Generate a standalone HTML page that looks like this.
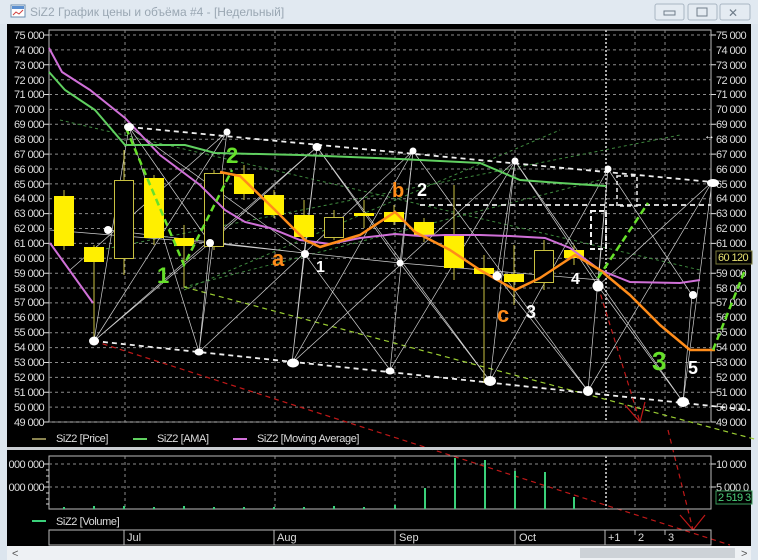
<!DOCTYPE html>
<html><head><meta charset="utf-8"><style>
html,body{margin:0;padding:0;background:#dde6ee;width:758px;height:560px;overflow:hidden}
svg{display:block}
text{font-family:"Liberation Sans","DejaVu Sans",sans-serif}
</style></head><body>
<svg width="758" height="560" viewBox="0 0 758 560" xmlns="http://www.w3.org/2000/svg">
<!-- window chrome -->
<rect x="0" y="0" width="758" height="560" fill="#dce5ee"/>
<rect x="0" y="0" width="758" height="24" fill="#e1e9f1"/>
<rect x="11" y="5" width="14" height="12" fill="#fff" stroke="#6a8db0"/>
<rect x="12" y="6" width="12" height="3" fill="#5b8fd0"/>
<path d="M13 15 L16 12 L19 14 L23 10" stroke="#d04040" fill="none"/>
<text x="30" y="16" font-size="12" fill="#9aa7b3">SiZ2 График цены и объёма #4 - [Недельный]</text>
<rect x="655" y="4" width="29" height="16" rx="2" fill="#e4ebf2" stroke="#a9b6c3"/>
<rect x="664" y="11" width="11" height="4" fill="none" stroke="#6f7d8a"/>
<rect x="688" y="4" width="29" height="16" rx="2" fill="#e4ebf2" stroke="#a9b6c3"/>
<rect x="697" y="8" width="10" height="8" fill="none" stroke="#6f7d8a"/>
<rect x="720" y="4" width="30" height="16" rx="2" fill="#e4ebf2" stroke="#a9b6c3"/>
<text x="728" y="17" font-size="12" fill="#6f7d8a" font-weight="bold">✕</text>
<!-- black area -->
<rect x="7" y="24" width="744" height="522" fill="#000"/>
<!-- scrollbar -->
<rect x="7" y="546" width="744" height="14" fill="#eef1f4"/>
<rect x="580" y="548" width="155" height="10" fill="#cdd2d7"/>
<text x="12" y="557" font-size="11" fill="#555">&lt;</text>
<text x="741" y="557" font-size="11" fill="#555">&gt;</text>
<!-- price panel frame -->
<rect x="49" y="30" width="662" height="392" fill="none" stroke="#bbb" stroke-width="1"/>
<!-- horizontal grid -->
<path stroke="#8a8a8a" stroke-width="1" stroke-dasharray="3,3" d="M49 35H711M49 49.9H711M49 64.8H711M49 79.7H711M49 94.5H711M49 109.4H711M49 124.3H711M49 139.2H711M49 154.1H711M49 169H711M49 183.9H711M49 198.7H711M49 213.6H711M49 228.5H711M49 243.4H711M49 258.3H711M49 273.2H711M49 288H711M49 302.9H711M49 317.8H711M49 332.7H711M49 347.6H711M49 362.5H711M49 377.4H711M49 392.2H711M49 407.1H711M49 422H711"/>
<!-- vertical grid -->
<path stroke="#8a8a8a" stroke-width="1" stroke-dasharray="3,3" d="M125 30V422M275 30V422M395 30V422M515 30V422M635 30V422M665 30V422"/>
<path stroke="#aaa" stroke-width="2" stroke-dasharray="2,2" d="M606 30V422"/>
<!-- axis labels -->
<g font-size="11" fill="#ddd" letter-spacing="-0.6" text-anchor="end">
<text x="44" y="39">75 000</text><text x="44" y="54">74 000</text><text x="44" y="69">73 000</text><text x="44" y="84">72 000</text><text x="44" y="98">71 000</text><text x="44" y="113">70 000</text><text x="44" y="128">69 000</text><text x="44" y="143">68 000</text><text x="44" y="158">67 000</text><text x="44" y="173">66 000</text><text x="44" y="188">65 000</text><text x="44" y="202">64 000</text><text x="44" y="217">63 000</text><text x="44" y="232">62 000</text><text x="44" y="247">61 000</text><text x="44" y="262">60 000</text><text x="44" y="277">59 000</text><text x="44" y="292">58 000</text><text x="44" y="306">57 000</text><text x="44" y="321">56 000</text><text x="44" y="336">55 000</text><text x="44" y="351">54 000</text><text x="44" y="366">53 000</text><text x="44" y="381">52 000</text><text x="44" y="396">51 000</text><text x="44" y="411">50 000</text><text x="44" y="426">49 000</text>
</g>
<g font-size="11" fill="#ddd" letter-spacing="-0.6">
<text x="716" y="39">75 000</text><text x="716" y="54">74 000</text><text x="716" y="69">73 000</text><text x="716" y="84">72 000</text><text x="716" y="98">71 000</text><text x="716" y="113">70 000</text><text x="716" y="128">69 000</text><text x="716" y="143">68 000</text><text x="716" y="158">67 000</text><text x="716" y="173">66 000</text><text x="716" y="188">65 000</text><text x="716" y="202">64 000</text><text x="716" y="217">63 000</text><text x="716" y="232">62 000</text><text x="716" y="247">61 000</text><text x="716" y="277">59 000</text><text x="716" y="292">58 000</text><text x="716" y="306">57 000</text><text x="716" y="321">56 000</text><text x="716" y="336">55 000</text><text x="716" y="351">54 000</text><text x="716" y="366">53 000</text><text x="716" y="381">52 000</text><text x="716" y="396">51 000</text><text x="716" y="411">50 000</text><text x="716" y="426">49 000</text>
</g>
<path stroke="#ddd" d="M44 35H49M44 64.8H49M44 94.5H49M44 124.3H49M44 154.1H49M44 183.9H49M44 213.6H49M44 243.4H49M44 273.2H49M44 302.9H49M44 332.7H49M44 362.5H49M44 392.2H49M44 422H49M711 35H716M711 64.8H716M711 94.5H716M711 124.3H716M711 154.1H716M711 183.9H716M711 213.6H716M711 243.4H716M711 273.2H716M711 302.9H716M711 332.7H716M711 362.5H716M711 392.2H716M711 422H716"/>
<rect x="716" y="251" width="36" height="13" fill="#000" stroke="#7a7a3a"/>
<text x="718" y="261" font-size="11" fill="#e6e070" letter-spacing="-0.6">60 120</text>
<!-- dim green dashed -->
<path stroke="#3f8a3f" stroke-width="1" stroke-dasharray="3,3" fill="none" d="M100 250L680 135M184 287L600 180M60 120L700 270M184 290L560 130"/>
<!-- lime dashed long -->
<path stroke="#9acd32" stroke-width="1.2" stroke-dasharray="5,4" fill="none" d="M184 287L758 440"/>
<!-- white thin web -->
<path stroke="#cfcfcf" stroke-width="0.7" fill="none" d="M94 341L129 127L210 243L94 341L227 132L199 352L129 127L304 253L292 363L317 147L210 243L199 352M304 253L317 147L400 263L413 151L390 370L304 253M292 363L413 151M390 370L515 161L490 381L400 263M497 276L515 161L598 286L608 169L588 391L497 276M490 381L608 169M598 286L712 182L683 402L598 286M588 391L712 182M692 295L683 402M692 295L608 169M50 230L210 243L400 263L600 280M108 230L304 253M70 270L227 132M317 147L490 381M413 151L588 391M515 161L683 402M94 341L317 147M199 352L413 151M292 363L515 161"/>
<!-- white dashed heavy -->
<path stroke="#eee" stroke-width="1.8" stroke-dasharray="5,4" fill="none" d="M129 127L712 182M94 341L750 410M420 205H711"/>
<rect x="617" y="176" width="20" height="30" fill="none" stroke="#eee" stroke-width="1.5" stroke-dasharray="4,3"/>
<rect x="591" y="211" width="15" height="38" fill="none" stroke="#eee" stroke-width="2" stroke-dasharray="5,3"/>
<!-- red dashed -->
<path stroke="#c01818" stroke-width="1.2" stroke-dasharray="5,4" fill="none" d="M94 341L730 545M598 286L640 422M668 430L693 530"/>
<path stroke="#c01818" stroke-width="1.2" fill="none" d="M625 405L640 422L645 402M680 515L693 530L705 515"/>
<!-- candles -->
<g stroke="#c8c040" stroke-width="1">
<path d="M64 190V250M94 245V345M124 150V275M154 175V245M184 225V287M214 170V250M244 165V200M274 190V218M304 200V240M334 210V240M364 200V228M394 205V225M424 218V242M454 185V280M484 255V383M514 245V305M544 240V290M574 245V265"/>
</g>
<g fill="#ffef00">
<rect x="54" y="196" width="20" height="50"/><rect x="84" y="247" width="20" height="15"/><rect x="144" y="178" width="20" height="60"/><rect x="174" y="238" width="20" height="8"/><rect x="234" y="174" width="20" height="20"/><rect x="264" y="195" width="20" height="20"/><rect x="294" y="215" width="20" height="22"/><rect x="354" y="213" width="20" height="3"/><rect x="384" y="212" width="20" height="10"/><rect x="414" y="222" width="20" height="14"/><rect x="444" y="236" width="20" height="32"/><rect x="474" y="268" width="20" height="6"/><rect x="504" y="274" width="20" height="8"/><rect x="564" y="250" width="20" height="8"/>
</g>
<g fill="#000" stroke="#c8c040">
<rect x="114.5" y="180.5" width="19" height="78"/><rect x="204.5" y="173.5" width="19" height="73"/><rect x="324.5" y="217.5" width="19" height="20"/><rect x="534.5" y="250.5" width="19" height="32"/>
</g>
<!-- MA & AMA -->
<path stroke="#d070d8" stroke-width="2" fill="none" d="M50 243L93 303M49 48L62 72L90 90L125 118L160 155L200 185L225 210L245 222L270 228L300 240L330 244L360 238L395 234L420 236L445 235L480 235L510 236L545 238L570 248L600 270L630 282L680 283L700 280"/>
<path stroke="#60d060" stroke-width="2" fill="none" d="M49 72L65 90L95 110L125 145L185 145L215 153L300 155L400 159L480 163L520 180L560 183L606 186"/>
<!-- orange -->
<path stroke="#ff8c1a" stroke-width="2.5" fill="none" stroke-linejoin="round" d="M220 172L240 176L275 210L305 240L320 247L360 235L395 212L415 232L450 250L480 270L515 290L540 278L575 255L600 270L630 295L660 325L690 350L715 350"/>
<!-- lime dashed zigzag -->
<path stroke="#66e02a" stroke-width="2.5" stroke-dasharray="7,4" fill="none" d="M126 128L184 265L232 170M598 278L648 203M713 350L745 270"/>
<!-- dots -->
<g fill="#fff">
<ellipse cx="129" cy="127" rx="5" ry="4"/><circle cx="227" cy="132" r="3.5"/><ellipse cx="317" cy="147" rx="4.5" ry="4"/><circle cx="413" cy="151" r="3.5"/><circle cx="515" cy="161" r="3.5"/><circle cx="608" cy="169" r="3.5"/><ellipse cx="713" cy="183" rx="6" ry="4"/><ellipse cx="94" cy="341" rx="5" ry="4.5"/><ellipse cx="199" cy="352" rx="4.5" ry="3.5"/><ellipse cx="293" cy="363" rx="6" ry="4.5"/><ellipse cx="390" cy="371" rx="4.5" ry="3.5"/><ellipse cx="490" cy="381" rx="6" ry="5"/><ellipse cx="588" cy="391" rx="5" ry="5"/><ellipse cx="683" cy="402" rx="6" ry="5"/><circle cx="210" cy="243" r="4"/><circle cx="305" cy="254" r="4"/><circle cx="400" cy="263" r="3.5"/><circle cx="598" cy="286" r="5.5"/><circle cx="693" cy="295" r="4"/><circle cx="497" cy="276" r="4.5"/><circle cx="108" cy="230" r="4"/>
</g>
<!-- handwritten labels -->
<g font-family="Liberation Sans,sans-serif" font-weight="bold">
<text x="157" y="283" font-size="22" fill="#66e02a">1</text>
<text x="226" y="163" font-size="22" fill="#66e02a">2</text>
<text x="652" y="370" font-size="26" fill="#66e02a">3</text>
<text x="272" y="266" font-size="22" fill="#ff8c1a">a</text>
<text x="392" y="197" font-size="20" fill="#ff8c1a">b</text>
<text x="497" y="322" font-size="22" fill="#ff8c1a">c</text>
<text x="316" y="272" font-size="16" fill="#fff">1</text>
<text x="417" y="196" font-size="18" fill="#fff">2</text>
<text x="526" y="318" font-size="18" fill="#fff">3</text>
<text x="571" y="284" font-size="16" fill="#fff">4</text>
<text x="688" y="374" font-size="18" fill="#fff">5</text>
</g>
<text x="704" y="139" font-size="11" fill="#fff">↔</text>
<!-- legend -->
<g font-size="11" fill="#ddd" letter-spacing="-0.4">
<path d="M32 439H46" stroke="#8a8450" stroke-width="2"/><text x="56" y="442">SiZ2 [Price]</text>
<path d="M133 439H147" stroke="#60d060" stroke-width="2"/><text x="157" y="442">SiZ2 [AMA]</text>
<path d="M233 439H247" stroke="#d070d8" stroke-width="2"/><text x="257" y="442">SiZ2 [Moving Average]</text>
</g>
<rect x="7" y="447" width="744" height="3" fill="#c8ccd0"/>
<!-- volume panel -->
<rect x="49" y="456" width="662" height="53" fill="none" stroke="#bbb"/>
<path stroke="#8a8a8a" stroke-dasharray="3,3" d="M49 464H711M49 487H711M125 456V509M275 456V509M395 456V509M515 456V509M635 456V509M665 456V509"/>
<path stroke="#aaa" stroke-width="2" stroke-dasharray="2,2" d="M606 456V509"/>
<g font-size="11" fill="#ddd" letter-spacing="-0.6">
<text x="44" y="468" text-anchor="end">000 000</text><text x="44" y="491" text-anchor="end">000 000</text>
<text x="716" y="468">10 000</text><text x="716" y="491">5 000 0</text>
</g>
<path stroke="#ddd" d="M44 464H49M44 487H49M711 464H716M711 487H716M46 470H49M46 476H49M46 482H49M46 493H49M46 499H49M46 504H49"/>
<rect x="716" y="491" width="36" height="13" fill="#000" stroke="#3a9a5a"/>
<text x="718" y="501" font-size="11" fill="#4ad07a" letter-spacing="-0.6">2 519 3</text>
<g stroke="#3ad07a" stroke-width="2">
<path d="M64 509V507M94 509V506M124 509V506M154 509V507M184 509V506M214 509V507M244 509V507M274 509V507M304 509V507M334 509V506M364 509V507M395 509V505M425 509V488M455 509V458M485 509V460M515 509V471M545 509V472M574 509V497"/>
</g>
<path d="M32 521H46" stroke="#3ad07a" stroke-width="2"/>
<text x="56" y="525" font-size="11" fill="#ddd" letter-spacing="-0.4">SiZ2 [Volume]</text>
<!-- date axis -->
<rect x="49" y="530" width="662" height="15" fill="none" stroke="#bbb"/>
<path stroke="#bbb" d="M124 530V545M274 530V545M395 530V545M515 530V545M605 530V545"/>
<path stroke="#bbb" d="M635 530V535M665 530V535"/>
<g font-size="11" fill="#ddd">
<text x="127" y="541">Jul</text><text x="277" y="541">Aug</text><text x="399" y="541">Sep</text><text x="519" y="541">Oct</text><text x="608" y="541">+1</text><text x="638" y="541">2</text><text x="668" y="541">3</text>
</g>
</svg>
</body></html>
